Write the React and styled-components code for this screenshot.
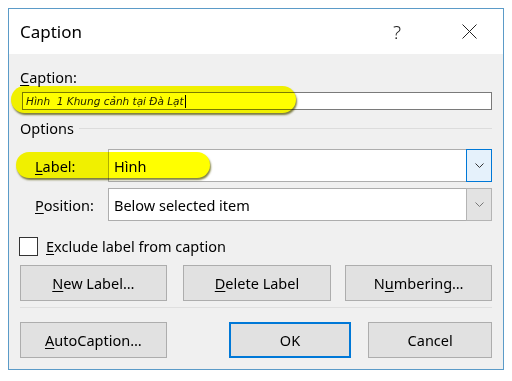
import styled, { createGlobalStyle } from 'styled-components';

const GlobalStyle = createGlobalStyle`
  html, body {
    margin: 0;
    padding: 0;
    background: #ffffff;
  }
  body {
    font-family: 'Noto Sans', 'Open Sans', sans-serif;
    color: #000;
  }
`;

const Page = styled.div`
  width: 512px;
  height: 381px;
  padding: 8px 0 0 8px;
  box-sizing: border-box;
`;

const Dialog = styled.div`
  position: relative;
  width: 496px;
  height: 362px;
  box-sizing: border-box;
  border: 1px solid #5b9bc8;
  background: #f0f0f0;
  display: flex;
  flex-direction: column;
`;

const TitleBar = styled.div`
  height: 45px;
  background: #ffffff;
  display: flex;
  align-items: center;
  padding: 0 0 0 11px;
  font-size: 17px;
`;

const Title = styled.div`
  flex: 1;
  margin-top: -1px;
`;

const HelpButton = styled.div`
  width: 36px;
  display: flex;
  justify-content: center;
  font-size: 19px;
  font-weight: 300;
  color: #222;
`;

const CloseButton = styled.div`
  width: 48px;
  margin: 0 10px 0 30px;
  display: flex;
  justify-content: center;
  align-items: center;
`;

const Body = styled.div`
  flex: 1;
  padding: 0 11px 0 11px;
  display: flex;
  flex-direction: column;
  font-size: 14.5px;
`;

const FieldLabel = styled.div`
  height: 20px;
  line-height: 20px;
  margin-top: ${(p) => p.$top || 0}px;
`;

const U = styled.span`
  text-decoration: underline;
  text-underline-offset: 2px;
  text-decoration-thickness: 1px;
`;

const TextInput = styled.div`
  margin: 5px 0 0 2px;
  height: 18px;
  box-sizing: border-box;
  border: 1px solid #7a7a7a;
  background: #fff;
  display: flex;
  align-items: center;
  padding-left: 3px;
  font-family: 'DejaVu Sans', Verdana, sans-serif;
  font-style: italic;
  font-size: 10.5px;
  color: #222;
`;

const Caret = styled.span`
  display: inline-block;
  width: 1px;
  height: 13px;
  background: #000;
  margin-left: 1px;
`;

const GroupHeader = styled.div`
  display: flex;
  align-items: center;
  gap: 5px;
  margin-top: 8px;
  height: 20px;
  line-height: 20px;
`;

const GroupLine = styled.div`
  flex: 1;
  height: 1px;
  background: #dcdcdc;
  margin-top: 1px;
`;

const ComboRow = styled.div`
  display: flex;
  align-items: center;
  margin-top: ${(p) => p.$top}px;
  padding-left: 15px;
`;

const ComboLabel = styled.div`
  width: 73px;
`;

const Combo = styled.div`
  flex: 1;
  height: 33px;
  box-sizing: border-box;
  border: 1px solid #adadad;
  background: #fff;
  display: flex;
  align-items: stretch;
`;

const ComboText = styled.div`
  flex: 1;
  display: flex;
  align-items: center;
  padding-left: 5px;
`;

const DropButton = styled.div`
  width: 26px;
  box-sizing: border-box;
  margin: -1px -1px -1px 0;
  border: 1px solid ${(p) => (p.$active ? '#0078d7' : '#b4b4b4')};
  background: ${(p) => (p.$active ? '#e5f1fb' : '#e3e3e3')};
  display: flex;
  justify-content: center;
  align-items: center;
`;

const CheckRow = styled.div`
  display: flex;
  align-items: center;
  gap: 8px;
  margin-top: 15px;
  height: 20px;
`;

const CheckBox = styled.div`
  width: 19px;
  height: 19px;
  box-sizing: border-box;
  border: 1px solid #333;
  background: #fff;
  margin-left: -1px;
`;

const ButtonRow = styled.div`
  display: flex;
  align-items: center;
  margin-top: ${(p) => p.$top}px;
`;

const Button = styled.div`
  width: ${(p) => p.$w}px;
  height: 36px;
  box-sizing: border-box;
  margin-left: ${(p) => p.$ml || 0}px;
  border: ${(p) => (p.$default ? '2px solid #0078d7' : '1px solid #adadad')};
  background: #e1e1e1;
  display: flex;
  justify-content: center;
  align-items: center;
`;

const Separator = styled.div`
  height: 1px;
  background: #dfdfdf;
  margin-top: 6px;
`;

const Highlight = styled.div`
  position: absolute;
  left: ${(p) => p.$x}px;
  top: ${(p) => p.$y}px;
  width: ${(p) => p.$w}px;
  height: ${(p) => p.$h}px;
  border-radius: ${(p) => p.$h / 2}px;
  background: #ffff00;
  mix-blend-mode: multiply;
  box-shadow: 1px 2px 2px rgba(90, 90, 0, 0.75);
  pointer-events: none;
`;

const Chevron = ({ color }) => (
  <svg width="9" height="5" viewBox="0 0 9 5">
    <path d="M0.5 0.5 L4.5 4.5 L8.5 0.5" fill="none" stroke={color} strokeWidth="1" />
  </svg>
);

const CloseIcon = () => (
  <svg width="15" height="15" viewBox="0 0 15 15">
    <path d="M0.5 0.5 L14.5 14.5 M14.5 0.5 L0.5 14.5" fill="none" stroke="#222" strokeWidth="1" />
  </svg>
);

export default function App() {
  return (
    <Page>
      <GlobalStyle />
      <Dialog>
        <TitleBar>
          <Title>Caption</Title>
          <HelpButton>?</HelpButton>
          <CloseButton>
            <CloseIcon />
          </CloseButton>
        </TitleBar>
        <Body>
          <FieldLabel $top={13}>
            <U>C</U>aption:
          </FieldLabel>
          <TextInput>
            Hình&nbsp; 1 Khung cảnh tại Đà Lạt
            <Caret />
          </TextInput>
          <GroupHeader>
            Options
            <GroupLine />
          </GroupHeader>
          <ComboRow $top={11}>
            <ComboLabel>
              <U>L</U>abel:
            </ComboLabel>
            <Combo>
              <ComboText>Hình</ComboText>
              <DropButton $active>
                <Chevron color="#333" />
              </DropButton>
            </Combo>
          </ComboRow>
          <ComboRow $top={6}>
            <ComboLabel>
              <U>P</U>osition:
            </ComboLabel>
            <Combo>
              <ComboText>Below selected item</ComboText>
              <DropButton>
                <Chevron color="#777" />
              </DropButton>
            </Combo>
          </ComboRow>
          <CheckRow>
            <CheckBox />
            <span>
              <U>E</U>xclude label from caption
            </span>
          </CheckRow>
          <ButtonRow $top={9}>
            <Button $w={147}>
              <span>
                <U>N</U>ew Label…
              </span>
            </Button>
            <Button $w={149} $ml={16}>
              <span>
                <U>D</U>elete Label
              </span>
            </Button>
            <Button $w={147} $ml={14}>
              <span>
                N<U>u</U>mbering…
              </span>
            </Button>
          </ButtonRow>
          <Separator />
          <ButtonRow $top={14}>
            <Button $w={147}>
              <span>
                <U>A</U>utoCaption…
              </span>
            </Button>
            <Button $w={123} $ml={62} $default>
              OK
            </Button>
            <Button $w={124} $ml={17}>
              Cancel
            </Button>
          </ButtonRow>
        </Body>
        <Highlight $x={2} $y={77} $w={285} $h={27} />
        <Highlight $x={7} $y={143} $w={194} $h={26} />
      </Dialog>
    </Page>
  );
}
